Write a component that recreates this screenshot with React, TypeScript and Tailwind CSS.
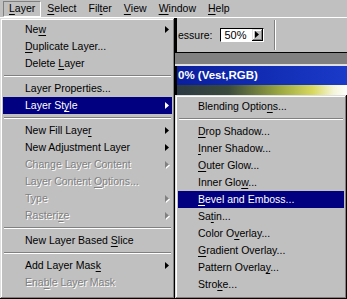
import React from 'react';

type Item = {
  label?: string;
  u?: number;
  arrow?: boolean;
  disabled?: boolean;
  active?: boolean;
  sep?: boolean;
};

const layerMenu: Item[] = [
  { label: 'New', u: 2, arrow: true },
  { label: 'Duplicate Layer...', u: 0 },
  { label: 'Delete Layer', u: 7 },
  { sep: true },
  { label: 'Layer Properties...' },
  { label: 'Layer Style', u: 8, arrow: true, active: true },
  { sep: true },
  { label: 'New Fill Layer', u: 13, arrow: true },
  { label: 'New Adjustment Layer', arrow: true },
  { label: 'Change Layer Content', arrow: true, disabled: true },
  { label: 'Layer Content Options...', u: 14, disabled: true },
  { label: 'Type', arrow: true, disabled: true },
  { label: 'Rasterize', u: 7, arrow: true, disabled: true },
  { sep: true },
  { label: 'New Layer Based Slice', u: 16 },
  { sep: true },
  { label: 'Add Layer Mask', u: 13, arrow: true },
  { label: 'Enable Layer Mask', u: 3, disabled: true },
];

const styleMenu: Item[] = [
  { label: 'Blending Options...', u: 14 },
  { sep: true },
  { label: 'Drop Shadow...', u: 0 },
  { label: 'Inner Shadow...', u: 0 },
  { label: 'Outer Glow...', u: 0 },
  { label: 'Inner Glow...', u: 9 },
  { label: 'Bevel and Emboss...', u: 0, active: true },
  { label: 'Satin...', u: 2 },
  { label: 'Color Overlay...', u: 7 },
  { label: 'Gradient Overlay...', u: 0 },
  { label: 'Pattern Overlay...', u: 14 },
  { label: 'Stroke...', u: 4 },
];

const menuBar = [
  { label: 'Layer', u: 0 },
  { label: 'Select', u: 0 },
  { label: 'Filter', u: 3 },
  { label: 'View', u: 0 },
  { label: 'Window', u: 0 },
  { label: 'Help', u: 0 },
];

function Label({ text, u }: { text: string; u?: number }) {
  if (u === undefined || u < 0) return <>{text}</>;
  return (
    <>
      {text.slice(0, u)}
      <span className="underline decoration-1 underline-offset-[2px]">{text[u]}</span>
      {text.slice(u + 1)}
    </>
  );
}

function Arrow({ color = '#000', shadow }: { color?: string; shadow?: boolean }) {
  return (
    <svg width="5" height="8" viewBox="0 0 5 8" className="block">
      {shadow && <path d="M1 1 L5 4.5 L1 8 Z" fill="#fff" />}
      <path d="M0 0 L4 3.5 L0 7 Z" fill={color} />
    </svg>
  );
}

function MenuList({ items, pl }: { items: Item[]; pl: string }) {
  return (
    <div className="flex flex-col">
      {items.map((item, i) =>
        item.sep ? (
          <div key={i} className="h-[8px] flex flex-col justify-center px-[1px]">
            <div className="h-[1px] bg-[#808080]" />
            <div className="h-[1px] bg-white" />
          </div>
        ) : (
          <div
            key={i}
            className={`h-[17px] flex items-center justify-between pr-[2px] ${pl} ${
              item.active
                ? 'bg-[#000080] text-white'
                : item.disabled
                ? 'text-[#808080] [text-shadow:1px_1px_0_#fff]'
                : 'text-black'
            }`}
          >
            <span className="whitespace-nowrap">
              <Label text={item.label!} u={item.u} />
            </span>
            {item.arrow && (
              <Arrow
                color={item.active ? '#fff' : item.disabled ? '#808080' : '#000'}
                shadow={item.disabled}
              />
            )}
          </div>
        )
      )}
    </div>
  );
}

const raised =
  'shadow-[inset_-1px_-1px_#000,inset_1px_1px_#dfdfdf,inset_-2px_-2px_#808080,inset_2px_2px_#fff]';

export default function App() {
  return (
    <div
      className="w-[347px] h-[299px] overflow-hidden bg-[#c0c0c0] text-[10.5px] leading-none flex flex-col"
      style={{ fontFamily: '"Liberation Sans", Arial, sans-serif' }}
    >
      {/* Menu bar */}
      <div className="h-[18px] flex items-center pl-[3px] shrink-0 border-b border-white">
        {menuBar.map((m, i) => (
          <div
            key={m.label}
            className={`h-[16px] flex items-center px-[5px] border ${
              i === 0 ? 'border-t-[#808080] border-l-[#808080] border-r-white border-b-white' : 'border-transparent'
            }`}
          >
            <Label text={m.label} u={m.u} />
          </div>
        ))}
      </div>

      <div className="flex flex-1 min-h-0">
        {/* Layer menu */}
        <div className={`w-[175px] shrink-0 p-[3px] ${raised}`}>
          <MenuList items={layerMenu} pl="pl-[22px]" />
        </div>

        {/* Right side: options bar, document window, submenu */}
        <div className="flex-1 flex flex-col min-w-0">
          <div className="h-[34px] flex items-center border-l-2 border-[#000] pl-[3px] shrink-0">
            <span className="ml-[-2px]">essure:</span>
            <div className="ml-[8px] flex h-[14px] border border-t-[#000] border-l-[#000] border-b-white border-r-white">
              <div className="w-[31px] bg-white flex items-center pl-[3px] text-[11px]">50%</div>
              <div className={`w-[11px] flex items-center justify-center ${raised}`}>
                <Arrow />
              </div>
            </div>
            <div className="ml-[10px] self-stretch my-[2px] w-[2px] border-l border-[#808080] border-r border-r-white" />
          </div>
          <div className="h-[1px] bg-black shrink-0" />
          <div className="h-[11px] bg-[#808080] shrink-0" />
          <div className="h-[2px] bg-[#dfdfdf] shrink-0" />
          <div className="h-[19px] shrink-0 flex items-center bg-gradient-to-r from-[#0a1e9e] to-[#1a3ac8] text-white font-bold text-[11.5px] pl-[1px] border-l-2 border-black">
            0% (Vest,RGB)
          </div>
          <div className="h-[10px] shrink-0 border-l-2 border-black bg-[linear-gradient(90deg,#2c3a44_0%,#3a4a3c_30%,#9aa640_60%,#d8d860_80%,#f4f4d8_92%,#ffffff_100%)]" />
          {/* Layer Style submenu */}
          <div className={`flex-1 p-[3px] ${raised}`}>
            <MenuList items={styleMenu} pl="pl-[20px]" />
          </div>
        </div>
      </div>
    </div>
  );
}
